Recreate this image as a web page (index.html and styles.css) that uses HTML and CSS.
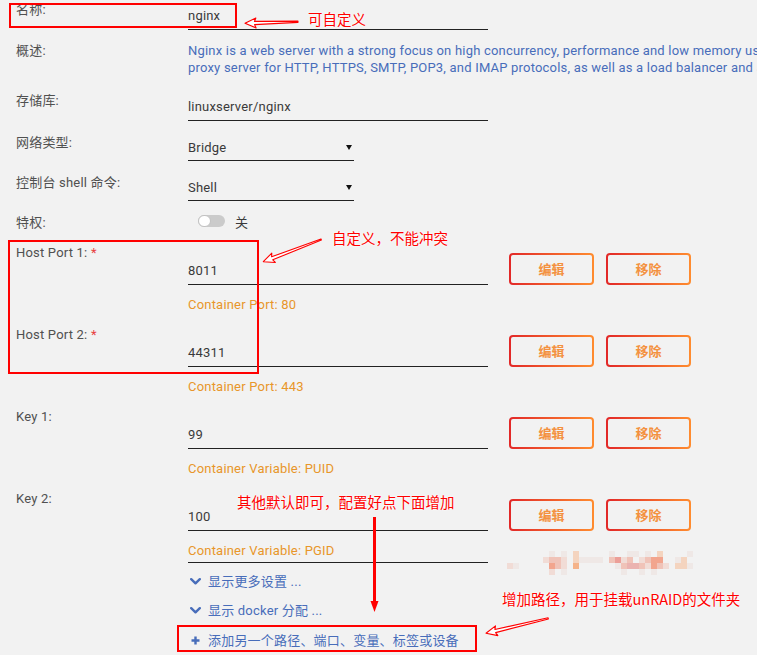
FILE: index.html
```html
<!DOCTYPE html>
<html lang="zh-CN">
<head>
<meta charset="utf-8">
<title>nginx</title>
<link rel="stylesheet" href="styles.css">
</head>
<body>
<main class="form">
  <div class="row r-name">
    <div class="label">名称:</div>
    <div class="input">nginx</div>
  </div>
  <div class="row r-desc">
    <div class="label">概述:</div>
    <div class="desc">Nginx is a web server with a strong focus on high concurrency, performance and low memory usage. It can act as a reverse<br>proxy server for HTTP, HTTPS, SMTP, POP3, and IMAP protocols, as well as a load balancer and an HTTP cache.</div>
  </div>
  <div class="row r-repo">
    <div class="label">存储库:</div>
    <div class="input">linuxserver/nginx</div>
  </div>
  <div class="row r-sel">
    <div class="label lab-sel">网络类型:</div>
    <div class="select"><span>Bridge</span><span class="caret"></span></div>
  </div>
  <div class="row r-sel">
    <div class="label lab-sel">控制台 shell 命令:</div>
    <div class="select"><span>Shell</span><span class="caret"></span></div>
  </div>
  <div class="row r-priv">
    <div class="label">特权:</div>
    <div class="switch-wrap"><div class="switch"><div class="knob"></div></div><span>关</span></div>
  </div>

  <div class="row port">
    <div class="label">Host Port 1: <span class="req">*</span></div>
    <div class="field"><div class="input">8011</div><div class="hint">Container Port: 80</div></div>
    <div class="actions"><div class="btn"><span>编辑</span></div><div class="btn"><span>移除</span></div></div>
  </div>
  <div class="row port">
    <div class="label">Host Port 2: <span class="req">*</span></div>
    <div class="field"><div class="input">44311</div><div class="hint">Container Port: 443</div></div>
    <div class="actions"><div class="btn"><span>编辑</span></div><div class="btn"><span>移除</span></div></div>
  </div>
  <div class="row port">
    <div class="label">Key 1:</div>
    <div class="field"><div class="input">99</div><div class="hint">Container Variable: PUID</div></div>
    <div class="actions"><div class="btn"><span>编辑</span></div><div class="btn"><span>移除</span></div></div>
  </div>
  <div class="row port">
    <div class="label">Key 2:</div>
    <div class="field"><div class="input">100</div><div class="hint">Container Variable: PGID</div></div>
    <div class="actions"><div class="btn"><span>编辑</span></div><div class="btn"><span>移除</span></div></div>
  </div>

  <div class="more">
    <div class="link"><span class="ico"><svg width="11" height="7" viewBox="0 0 11 7"><polyline points="1.2,1.2 5.5,5.3 9.8,1.2" fill="none" stroke="#486dba" stroke-width="2.4" stroke-linecap="round" stroke-linejoin="round"/></svg></span><span>显示更多设置 ...</span></div>
    <div class="link"><span class="ico"><svg width="11" height="7" viewBox="0 0 11 7"><polyline points="1.2,1.2 5.5,5.3 9.8,1.2" fill="none" stroke="#486dba" stroke-width="2.4" stroke-linecap="round" stroke-linejoin="round"/></svg></span><span>显示 docker 分配 ...</span></div>
    <div class="link"><span class="ico"><svg width="9" height="9" viewBox="0 0 9 9"><path d="M4.5 0.5V8.5M0.5 4.5H8.5" stroke="#486dba" stroke-width="2.4"/></svg></span><span>添加另一个路径、端口、变量、标签或设备</span></div>
  </div>
</main>

<div class="mosaic">
  <i></i><i></i><i></i><i></i><i></i><i></i><i></i><i class="c1"></i><i></i><i class="c1"></i><i></i><i class="c6"></i><i></i><i></i><i></i><i></i><i></i><i class="c1"></i><i></i><i></i><i class="c1"></i><i class="c1"></i><i></i><i class="c1"></i><i></i><i class="c6"></i><i></i><i></i><i></i><i></i><i class="c1"></i>
  <i></i><i></i><i></i><i></i><i></i><i></i><i class="c2"></i><i class="c3"></i><i class="c3"></i><i class="c2"></i><i></i><i class="c6"></i><i class="c1"></i><i class="c1"></i><i class="c1"></i><i class="c1"></i><i></i><i class="c3"></i><i class="c7"></i><i class="c2"></i><i class="c3"></i><i></i><i class="c2"></i><i class="c3"></i><i class="c4"></i><i class="c4"></i><i></i><i></i><i class="c1"></i><i class="c6"></i><i></i>
  <i class="c2"></i><i class="c1"></i><i></i><i></i><i></i><i></i><i></i><i class="c4"></i><i class="c3"></i><i class="c2"></i><i></i><i class="c5"></i><i></i><i></i><i></i><i></i><i></i><i></i><i class="c1"></i><i class="c3"></i><i class="c8"></i><i class="c8"></i><i class="c3"></i><i class="c2"></i><i class="c4"></i><i class="c3"></i><i class="c2"></i><i></i><i class="c6"></i><i class="c6"></i><i class="c1"></i>
  <i></i><i></i><i></i><i></i><i></i><i></i><i></i><i class="c2"></i><i></i><i class="c1"></i><i></i><i></i><i></i><i></i><i></i><i></i><i></i><i></i><i></i><i class="c1"></i><i></i><i></i><i class="c1"></i><i></i><i class="c1"></i><i></i><i></i><i></i><i></i><i></i><i></i>
</div>

<div class="mark m-name"></div>
<div class="mark m-port"></div>
<div class="mark m-add"></div>

<svg class="arrows" width="757" height="655" viewBox="0 0 757 655">
  <g transform="translate(245,23.3) rotate(-1.7)">
    <polygon points="0,0 11,-5 9.5,-1.6 53,-0.6 53,0.6 9.5,1.6 11,5" fill="#fff" stroke="#f00" stroke-width="1.1" stroke-linejoin="round"/>
  </g>
  <g transform="translate(263.3,261.7) rotate(-21)">
    <polygon points="0,0 11,-5 9.5,-1.6 62,-0.6 62,0.6 9.5,1.6 11,5" fill="#fff" stroke="#f00" stroke-width="1.1" stroke-linejoin="round"/>
  </g>
  <g transform="translate(486,633.3) rotate(-13.5)">
    <polygon points="0,0 11,-5 9.5,-1.6 64,-0.6 64,0.6 9.5,1.6 11,5" fill="#fff" stroke="#f00" stroke-width="1.1" stroke-linejoin="round"/>
  </g>
  <line x1="374.5" y1="517" x2="374.5" y2="603" stroke="#f00" stroke-width="3"/>
  <polygon points="370.5,601 378.5,601 374.5,612" fill="#f00"/>
</svg>

<div class="note n1">可自定义</div>
<div class="note n2">自定义，不能冲突</div>
<div class="note n3">其他默认即可，配置好点下面增加</div>
<div class="note n4">增加路径，用于挂载unRAID的文件夹</div>
</body>
</html>
```
FILE: styles.css
```css
* { box-sizing: border-box; margin: 0; padding: 0; }
html, body { width: 757px; height: 655px; overflow: hidden; }
body {
  position: relative;
  background: #f2f2f2;
  color: #3a3a3a;
  font: 13px/17px Roboto, "Noto Sans CJK SC", sans-serif;
  letter-spacing: 0.2px;
}

.form { padding: 1px 0 0 16px; }
.row {
  display: grid;
  grid-template-columns: 172px 300px auto;
  align-items: start;
}
.label { color: #505050; white-space: nowrap; }
.lab-sel { padding-top: 1px; }
.req { color: #e84040; }

.input {
  padding: 6px 0 5px;
  border-bottom: 1px solid #222;
  white-space: nowrap;
}
.select {
  width: 166px;
  padding: 6px 0 4px;
  border-bottom: 1px solid #222;
  display: flex;
  justify-content: space-between;
  align-items: center;
}
.caret {
  width: 0; height: 0;
  border-left: 3px solid transparent;
  border-right: 3px solid transparent;
  border-top: 5px solid #111;
  margin-right: 2px;
}

.r-desc { margin-top: 12px; }
.desc { color: #486dba; white-space: nowrap; }
.r-repo { margin-top: 16px; }
.r-sel { margin-top: 12px; }
.r-priv { margin-top: 13px; }

.switch-wrap {
  display: flex;
  align-items: flex-start;
  gap: 10px;
  padding-left: 10px;
  color: #3a3a3a;
}
.switch {
  width: 27px; height: 12px;
  margin-top: 1px;
  border-radius: 6px;
  background: #cbcbcb;
  display: flex;
}
.knob {
  width: 13px; height: 12px;
  border-radius: 6px;
  background: #fff;
  border: 1px solid #c2c2c2;
}

.port { margin-top: 13px; }
.field { padding-top: 12px; }
.hint { margin-top: 11px; color: #e8962a; white-space: nowrap; }
.actions { display: flex; gap: 12px; margin: 9px 0 0 21px; }
.btn {
  width: 85px; height: 32px;
  padding: 2px;
  border-radius: 4px;
  background: linear-gradient(90deg, #e22828, #ff8c2f);
}
.btn span {
  display: flex;
  height: 100%;
  align-items: center;
  justify-content: center;
  background: #f2f2f2;
  border-radius: 2px;
  color: #f4913f;
  font-weight: bold;
  letter-spacing: 0;
}

.more {
  width: 300px;
  margin: 3px 0 0 172px;
  border-top: 1px solid #222;
  padding-top: 3.5px;
}
.link {
  display: flex;
  align-items: center;
  gap: 6px;
  padding: 6px 0 6.5px;
  color: #486dba;
  white-space: nowrap;
}
.ico { width: 14px; display: flex; justify-content: center; }

.mosaic {
  position: absolute;
  left: 507px; top: 551px;
  display: grid;
  grid-template-columns: repeat(31, 6px);
  grid-auto-rows: 6px;
}
.c1 { background: #efe8e6; }
.c2 { background: #f1dcd6; }
.c3 { background: #f0c3b8; }
.c4 { background: #f2a58e; }
.c5 { background: #f5b389; }
.c6 { background: #f4d4bf; }
.c7 { background: #ec9f98; }
.c8 { background: #ebb3b0; }

.mark { position: absolute; border: 2px solid #f00; }
.m-name { left: 9px; top: 3px; width: 228px; height: 25px; }
.m-port { left: 8px; top: 240px; width: 251px; height: 134px; }
.m-add { left: 177px; top: 625px; width: 300px; height: 27px; }

.arrows { position: absolute; left: 0; top: 0; pointer-events: none; }

.note {
  position: absolute;
  color: #f00;
  font: 14.5px/20px "Noto Sans CJK SC", sans-serif;
  letter-spacing: 0;
  white-space: nowrap;
  text-shadow: 0 0 2px #fff, 0 0 3px rgba(255,255,255,.9);
}
.n1 { left: 308px; top: 9px; }
.n2 { left: 332px; top: 228px; }
.n3 { left: 237px; top: 492px; }
.n4 { left: 502px; top: 589px; }
```
